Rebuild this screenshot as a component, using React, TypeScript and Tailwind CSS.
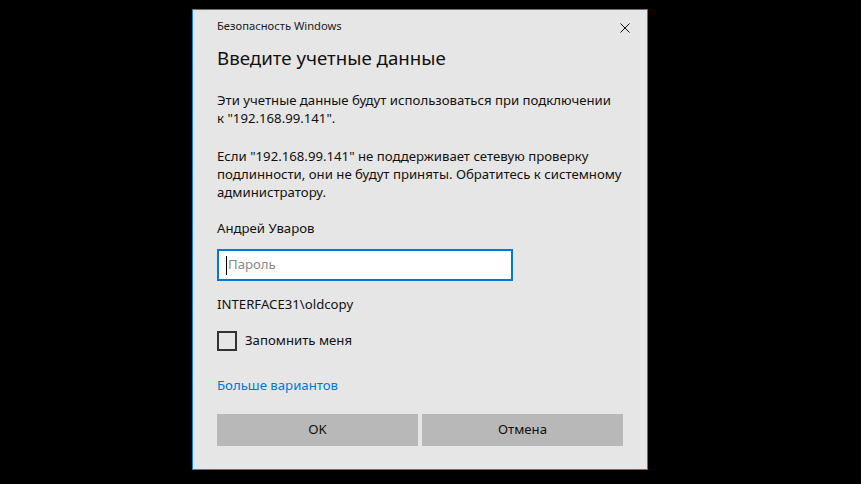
export default function App() {
  return (
    <div className="w-[861px] h-[484px] bg-black flex items-start pl-[192px] pt-[9px]" style={{ fontFamily: '"Noto Sans", sans-serif' }}>
      <div className="w-[456px] h-[461px] bg-[#e6e6e6] border border-[#1883d7] flex flex-col px-6 text-[#000]">
        {/* Title bar */}
        <div className="flex items-center justify-between h-[33px]">
          <span className="text-[11.2px] text-[#1a1a1a]">Безопасность Windows</span>
          <svg width="10" height="10" viewBox="0 0 10 10" className="mr-[-7px] mt-[2px]">
            <path d="M0.5 0.5 L9.5 9.5 M9.5 0.5 L0.5 9.5" stroke="#111" strokeWidth="1" fill="none" />
          </svg>
        </div>

        <h1 className="mt-[1px] text-[18.7px] leading-[28px] text-[#111]">Введите учетные данные</h1>

        <div className="mt-[19px] text-[13.2px] leading-[18px] text-[#111]">
          <p>Эти учетные данные будут использоваться при подключении к{"\u00a0"}"192.168.99.141".</p>
          <p className="mt-[20px]">
            Если "192.168.99.141" не поддерживает сетевую проверку подлинности, они не будут приняты. Обратитесь к системному администратору.
          </p>
        </div>

        <div className="mt-[18px] text-[13.2px] leading-[18px] text-[#111]">Андрей Уваров</div>

        <div className="mt-[12px] w-[296px] h-[32px] bg-white border-2 border-[#0078d7] flex items-center px-[7px] text-[13.2px]">
          <span className="w-px h-[19px] bg-black mr-[1px]" />
          <span className="text-[#8a8a8a]">Пароль</span>
        </div>

        <div className="mt-[14px] text-[13.2px] leading-[18px] text-[#111]">INTERFACE31\oldcopy</div>

        <div className="mt-[18px] flex items-center gap-[8px]">
          <div className="w-[20px] h-[20px] border-2 border-[#333]" />
          <span className="text-[13.2px] text-[#111]">Запомнить меня</span>
        </div>

        <div className="mt-[25px] text-[13.2px] leading-[18px] text-[#0078d7]">Больше вариантов</div>

        <div className="mt-[20px] flex gap-[4px]">
          <button className="flex-1 h-[32px] bg-[#b8b8b8] text-[13.2px] text-[#111]">OK</button>
          <button className="flex-1 h-[32px] bg-[#b8b8b8] text-[13.2px] text-[#111]">Отмена</button>
        </div>
      </div>
    </div>
  )
}
